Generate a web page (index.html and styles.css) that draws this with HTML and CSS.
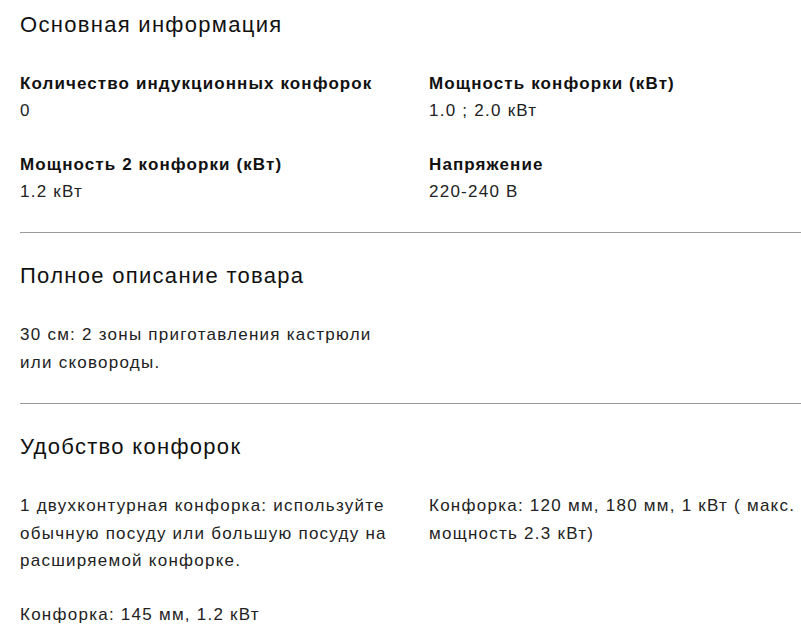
FILE: index.html
```html
<!DOCTYPE html>
<html lang="ru">
<head>
<meta charset="utf-8">
<title>Характеристики</title>
<link rel="stylesheet" href="styles.css">
</head>
<body>
<main class="page">
  <section class="section">
    <h2 class="section-title">Основная информация</h2>
    <div class="grid">
      <div class="spec">
        <div class="spec-label">Количество индукционных конфорок</div>
        <div class="spec-value">0</div>
      </div>
      <div class="spec">
        <div class="spec-label">Мощность конфорки (кВт)</div>
        <div class="spec-value">1.0 ; 2.0 кВт</div>
      </div>
      <div class="spec">
        <div class="spec-label">Мощность 2 конфорки (кВт)</div>
        <div class="spec-value">1.2 кВт</div>
      </div>
      <div class="spec">
        <div class="spec-label">Напряжение</div>
        <div class="spec-value">220-240 В</div>
      </div>
    </div>
  </section>
  <section class="section">
    <h2 class="section-title">Полное описание товара</h2>
    <div class="grid">
      <div class="text">
        <p>30 см: 2 зоны приготавления кастрюли или сковороды.</p>
      </div>
    </div>
  </section>
  <section class="section">
    <h2 class="section-title">Удобство конфорок</h2>
    <div class="grid">
      <div class="text">
        <p>1 двухконтурная конфорка: используйте обычную посуду или большую посуду на расширяемой конфорке.</p>
        <p>Конфорка: 145 мм, 1.2 кВт</p>
      </div>
      <div class="text">
        <p>Конфорка: 120 мм, 180 мм, 1 кВт ( макс. мощность 2.3 кВт)</p>
      </div>
    </div>
  </section>
</main>
</body>
</html>
```

FILE: styles.css
```css
html, body {
  margin: 0;
  padding: 0;
  background: #fff;
  overflow: hidden;
}
body {
  font-family: "Liberation Sans", Arial, sans-serif;
  color: #222;
}
.page {
  width: 798px;
  padding: 0 0 0 20px;
}
.section {
  border-bottom: 1px solid #9a9a9a;
  padding-bottom: 27px;
}
.section:last-child {
  border-bottom: none;
}
.section-title {
  margin: 0;
  padding: 11px 0 0;
  font-size: 22px;
  font-weight: normal;
  line-height: 28px;
  letter-spacing: 1.3px;
  color: #111;
}
.section + .section .section-title {
  padding-top: 29px;
}
.grid {
  display: grid;
  grid-template-columns: 380px 380px;
  column-gap: 29px;
  row-gap: 26px;
  margin-top: 31px;
}
.spec-label {
  font-size: 17px;
  font-weight: bold;
  line-height: 27px;
  letter-spacing: 1.1px;
  color: #111;
}
.spec-value,
.text p {
  font-size: 17px;
  line-height: 27.5px;
  letter-spacing: 1.25px;
  color: #222;
}
.text p {
  margin: 0 0 26px;
}
.text p:last-child {
  margin-bottom: 0;
}
```
